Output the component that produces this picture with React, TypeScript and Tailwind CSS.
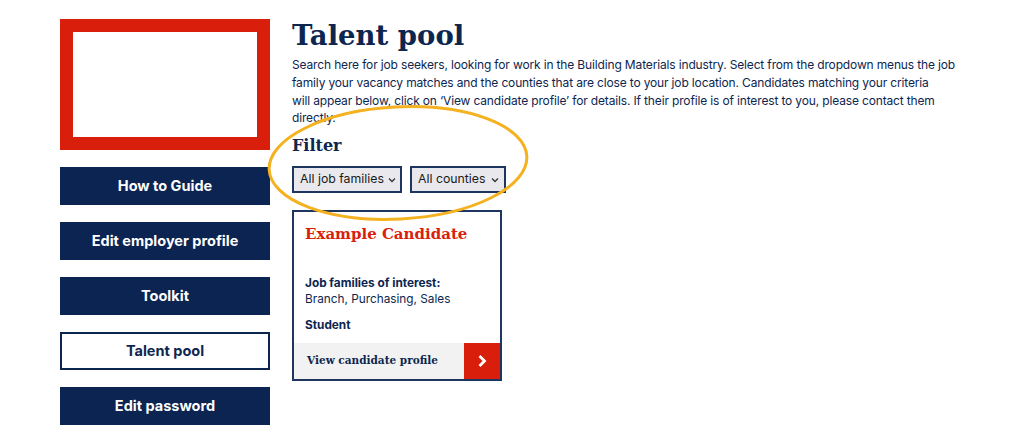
import React from "react";

const navy = "text-[#0d2650]";

function NavButton({ label, active }: { label: string; active?: boolean }) {
  return (
    <div
      className={
        "h-[38px] w-[210px] flex items-center justify-center text-[14.5px] font-bold " +
        (active
          ? "bg-white border-2 border-[#0d2650] text-[#0d2650]"
          : "bg-[#0b2452] text-white")
      }
    >
      {label}
    </div>
  );
}

function Select({ label, w }: { label: string; w: string }) {
  return (
    <div
      className={
        "h-[27px] border-2 border-[#1e3560] bg-[#e9e9ed] flex items-center justify-between pl-[6px] pr-[5px] text-[12.3px] text-[#1a1a1a] whitespace-nowrap " +
        w
      }
    >
      <span>{label}</span>
      <svg width="8" height="6" viewBox="0 0 8 6" className="ml-1 shrink-0">
        <path d="M1 1.5 L4 4.5 L7 1.5" fill="none" stroke="#333" strokeWidth="1.3" />
      </svg>
    </div>
  );
}

export default function App() {
  return (
    <div
      className="relative w-[1024px] h-[439px] bg-white overflow-hidden"
      style={{ fontFamily: "Inter, 'Noto Sans', sans-serif" }}
    >
      <div className="flex pl-[60px] pt-[19px] gap-[22px]">
        <div className="flex flex-col w-[210px]">
          <div className="h-[131px] w-[210px] border-[13px] border-[#d91f0c] bg-white" />
          <div className="flex flex-col gap-[17px] mt-[17px]">
            <NavButton label="How to Guide" />
            <NavButton label="Edit employer profile" />
            <NavButton label="Toolkit" />
            <NavButton label="Talent pool" active />
            <NavButton label="Edit password" />
          </div>
        </div>
        <div className="flex flex-col">
          <h1
            className={"text-[27.5px] leading-[32px] font-bold " + navy}
            style={{ fontFamily: "'DejaVu Serif', serif" }}
          >
            Talent pool
          </h1>
          <p className={"mt-[5px] text-[12px] tracking-[-0.15px] leading-[17.8px] whitespace-nowrap " + navy}>
            Search here for job seekers, looking for work in the Building Materials industry. Select from the dropdown menus the job
            <br />
            family your vacancy matches and the counties that are close to your job location. Candidates matching your criteria
            <br />
            will appear below, click on ‘View candidate profile’ for details. If their profile is of interest to you, please contact them
            <br />
            directly.
          </p>
          <h2
            className={"mt-[9px] text-[16px] leading-[20px] font-bold " + navy}
            style={{ fontFamily: "'DejaVu Serif', serif" }}
          >
            Filter
          </h2>
          <div className="flex gap-[8px] mt-[10px]">
            <Select label="All job families" w="w-[110px]" />
            <Select label="All counties" w="w-[96px]" />
          </div>
          <div className="mt-[17px] w-[210px] h-[171px] border-2 border-[#1e3560] flex flex-col">
            <div className="flex-1 px-[11px] pt-[12px]">
              <div
                className="text-[15px] font-bold text-[#d91f0c] leading-[20px]"
                style={{ fontFamily: "'DejaVu Serif', serif" }}
              >
                Example Candidate
              </div>
              <div className={"mt-[32px] text-[11.8px] font-bold leading-[15px] " + navy}>
                Job families of interest:
              </div>
              <div className={"text-[11.8px] leading-[17px] " + navy}>Branch, Purchasing, Sales</div>
              <div className={"mt-[10px] text-[11.8px] font-bold leading-[15px] " + navy}>Student</div>
            </div>
            <div className="h-[36px] flex bg-[#f2f2f2]">
              <div
                className={"flex-1 flex items-center pl-[13px] text-[10.5px] font-bold " + navy}
                style={{ fontFamily: "'DejaVu Serif', serif" }}
              >
                View candidate profile
              </div>
              <div className="w-[36px] h-[36px] bg-[#d91f0c] flex items-center justify-center">
                <svg width="10" height="14" viewBox="0 0 10 14">
                  <path d="M2.5 2 L7.5 7 L2.5 12" fill="none" stroke="white" strokeWidth="2.8" />
                </svg>
              </div>
            </div>
          </div>
        </div>
      </div>
      <svg className="absolute left-0 top-0 pointer-events-none" width="1024" height="439">
        <ellipse
          cx="398"
          cy="163"
          rx="129"
          ry="56"
          fill="none"
          stroke="#f4b120"
          strokeWidth="3"
          transform="rotate(-3 398 163)"
        />
      </svg>
    </div>
  );
}
